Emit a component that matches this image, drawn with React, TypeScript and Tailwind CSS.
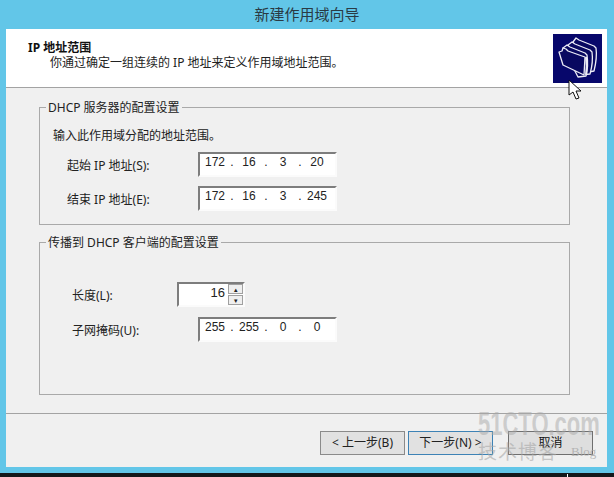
const font = "font-['Noto_Sans','Noto_Sans_CJK_SC',sans-serif]";

function IpField({ parts }: { parts: string[] }) {
  return (
    <div className="flex h-[25px] w-[139px] items-start border-2 border-t-[#7d7d7d] border-l-[#7d7d7d] border-r-[#fbfbfb] border-b-[#fbfbfb] bg-white pl-[2px] font-['Liberation_Sans',sans-serif] text-[12px] leading-[17px] text-[#222]">
      {parts.map((p, i) => (
        <div className="flex" key={i}>
          <span className="w-[26px] text-center">{p}</span>
          {i < 3 && <span className="w-[8px] text-center">.</span>}
        </div>
      ))}
    </div>
  );
}

function Row({ label, parts }: { label: string; parts: string[] }) {
  return (
    <div className="flex items-center">
      <span className="w-[145px] pl-[14px] pt-[3px] text-[12px] text-[#222]">{label}</span>
      <IpField parts={parts} />
    </div>
  );
}

function FolderIcon() {
  return (
    <div className="h-[49px] w-[49px] bg-[#07076b]">
      <svg width="49" height="49" viewBox="0 0 49 49" fill="#080860" stroke="#ececf6" strokeWidth="1.3" strokeLinejoin="round">
        <path d="M20 8l3-4 3 2 15 6 2 2c1 7 0 15-2 23l-10 2z" />
        <path d="M15 11l4-3 3 2 15 6 2 2c1 7 0 15-2 22l-10 1z" />
        <path d="M10 14l4-3 3 2 15 6 2 2c1 7 1 13-1 21l-8 1z" />
        <path d="M6 18l3-1 1-3 3 1 2 2 14 5 3 1-1 18-21-10-4-13z" />
        <path d="M33 23c1 6 1 12 0 18" strokeWidth="2" />
      </svg>
    </div>
  );
}

function Cursor() {
  return (
    <svg className="absolute left-[568px] top-[79px]" width="14" height="22" viewBox="0 0 14 22">
      <path d="M1 1v15l4-3 3 7 3-1-3-7h5L1 1z" fill="#fff" stroke="#111" strokeWidth="1" />
    </svg>
  );
}

export default function App() {
  return (
    <div className={`${font} relative h-[477px] w-[614px] overflow-hidden bg-[#62c6e8]`}>
      <div className="flex h-[29px] items-center justify-center text-[15px] text-[#2a3a44]">新建作用域向导</div>

      <div className="ml-[6px] mr-[7px] flex h-[438px] flex-col bg-[#f0f0f0]">
        <header className="flex h-[59px] shrink-0 justify-between border-b border-[#a3a3a3] bg-white pl-[22px] pr-[5px] pt-[5px]">
          <div className="pt-[6px] text-[12px] leading-[15px] text-[#111]">
            <div className="font-bold">IP 地址范围</div>
            <div className="pl-[22px] text-[#222]">你通过确定一组连续的 IP 地址来定义作用域地址范围。</div>
          </div>
          <FolderIcon />
        </header>

        <main className="flex flex-col gap-[9px] pl-[33px] pr-[37px] pt-[11px]">
          <fieldset className="h-[126px] border border-[#a9a9a9] pl-[13px]">
            <legend className="-ml-[7px] px-[2px] text-[12px] leading-[17px] text-[#222]">DHCP 服务器的配置设置</legend>
            <p className="pt-[11px] text-[12px] leading-[17px] text-[#222]">输入此作用域分配的地址范围。</p>
            <div className="mt-[8px] flex flex-col gap-[9px]">
              <Row label="起始 IP 地址(S):" parts={["172", "16", "3", "20"]} />
              <Row label="结束 IP 地址(E):" parts={["172", "16", "3", "245"]} />
            </div>
          </fieldset>

          <fieldset className="h-[161px] border border-[#a9a9a9] pl-[13px]">
            <legend className="-ml-[7px] px-[2px] text-[12px] leading-[17px] text-[#222]">传播到 DHCP 客户端的配置设置</legend>
            <div className="mt-[31px] flex items-center">
              <span className="w-[124px] pl-[19px] pt-[3px] text-[12px] text-[#222]">长度(L):</span>
              <div className="flex h-[25px] w-[68px] border-2 border-t-[#7d7d7d] border-l-[#7d7d7d] border-r-[#fbfbfb] border-b-[#fbfbfb] bg-white">
                <span className="flex-1 pr-[3px] text-right font-['Liberation_Sans',sans-serif] text-[13px] leading-[17px] text-[#222]">16</span>
                <div className="flex w-[15px] flex-col gap-[1px] bg-white">
                  <div className="flex h-[10px] items-center justify-center border border-[#a0a0a0] bg-[#efefef] text-[7px] leading-none text-[#222]">▴</div>
                  <div className="flex h-[10px] items-center justify-center border border-[#a0a0a0] bg-[#efefef] text-[7px] leading-none text-[#222]">▾</div>
                </div>
              </div>
            </div>
            <div className="mt-[10px] flex items-center">
              <span className="w-[145px] pl-[19px] pt-[3px] text-[12px] text-[#222]">子网掩码(U):</span>
              <IpField parts={["255", "255", "0", "0"]} />
            </div>
          </fieldset>
        </main>

        <footer className="mt-[18px] flex flex-1 items-start justify-end border-t border-[#a3a3a3] pr-[14px] pt-[17px]">
          <button className="h-[24px] w-[85px] border border-[#8a8a8a] bg-[#e1e1e1] text-[12px] text-[#222]">&lt; 上一步(B)</button>
          <button className="ml-[3px] h-[24px] w-[85px] border border-[#3d82b5] bg-[#e1e1e1] text-[12px] text-[#222]">下一步(N) &gt;</button>
          <button className="ml-[15px] h-[24px] w-[85px] border border-[#6f6f6f] bg-[#dedede] text-[12px] text-[#111]">取消</button>
        </footer>
      </div>

      <div className="absolute bottom-0 left-0 h-[4px] w-full bg-[#14181b]" />
      <div className="absolute bottom-0 left-[567px] h-[3px] w-[1px] bg-white" />

      <Cursor />
      <div className="pointer-events-none absolute left-[478px] top-[408px] origin-top scale-y-150 whitespace-nowrap font-['Liberation_Sans',sans-serif] text-[22px] font-bold leading-[22px] text-[#a8a8a8]/50">51CTO.com</div>
      <div className="pointer-events-none absolute left-[478px] top-[440px] whitespace-nowrap text-[19px] leading-[24px] tracking-[1px] text-[#a8a8a8]/60">技术博客</div>
      <div className="pointer-events-none absolute left-[571px] top-[443px] whitespace-nowrap font-['Liberation_Serif',serif] text-[13px] leading-[18px] text-[#a8a8a8]/80">Blog</div>
    </div>
  );
}
